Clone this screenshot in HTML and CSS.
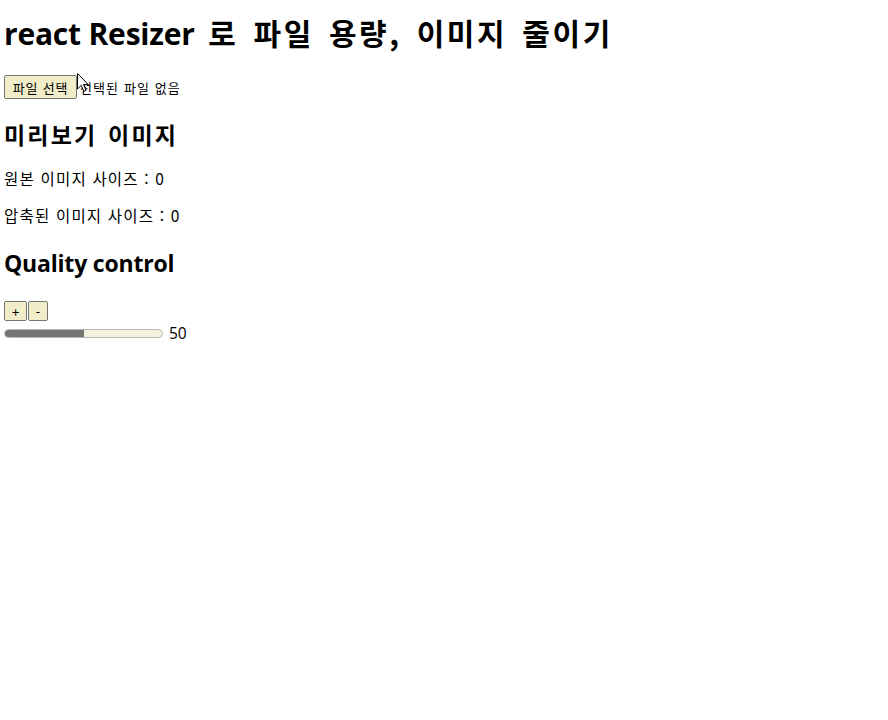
FILE: index.html
```html
<!DOCTYPE html>
<html lang="ko">
<head>
<meta charset="utf-8">
<title>react Resizer</title>
<link rel="stylesheet" href="styles.css">
</head>
<body>
<main class="app">
  <h1 class="title">react Resizer <span class="ko">로 파일 용량, 이미지 줄이기</span></h1>
  <div class="file-row">
    <span class="btn file-btn">파일 선택</span>
    <span class="file-label">선택된 파일 없음</span>
  </div>
  <h2 class="subtitle ko-sub">미리보기 이미지</h2>
  <p class="info">원본 이미지 사이즈 : 0</p>
  <p class="info">압축된 이미지 사이즈 : 0</p>
  <h2 class="subtitle quality">Quality control</h2>
  <div class="step-row">
    <span class="btn step">+</span>
    <span class="btn step">-</span>
  </div>
  <div class="range-row">
    <div class="range"><div class="range-fill" style="width:50%"></div></div>
    <span class="range-value">50</span>
  </div>
</main>
<svg class="cursor" width="12" height="19" viewBox="0 0 12 19" aria-hidden="true">
  <path d="M0.5 0.5 L0.5 16 L4.2 12.4 L6.8 18.3 L9 17.3 L6.5 11.6 L11.3 11.6 Z" fill="#fff" stroke="#000" stroke-width="1" stroke-linejoin="round"/>
</svg>
</body>
</html>
```
FILE: styles.css
```css
html, body {
  margin: 0;
  padding: 0;
}
body {
  position: relative;
  background-color: #ffffff;
  background-image:
    radial-gradient(circle at 1px 1px, #fff4a0 0.5px, transparent 0.7px),
    radial-gradient(circle at 3px 5px, #fff4a0 0.5px, transparent 0.7px);
  background-size: 4px 8px, 4px 8px;
  font-family: "Open Sans", "Noto Sans CJK KR", sans-serif;
  color: #000;
  min-height: 720px;
}
.app {
  padding: 0 4px;
}
.title {
  margin: 0;
  padding-top: 10px;
  font-size: 30px;
  line-height: 44px;
  font-weight: 700;
  letter-spacing: -0.2px;
}
.title .ko {
  font-family: "Noto Sans CJK KR", sans-serif;
  font-size: 30px;
  letter-spacing: 2.6px;
  word-spacing: 4px;
  margin-left: 6px;
}
.file-row {
  margin-top: 19px;
  display: flex;
  align-items: center;
  gap: 3px;
  height: 24px;
}
.btn {
  display: inline-flex;
  align-items: center;
  justify-content: center;
  background: #f1edc8;
  border: 1px solid #767676;
  border-radius: 2px;
  box-sizing: border-box;
  font-family: "Noto Sans CJK KR", sans-serif;
  font-size: 13px;
  color: #000;
}
.file-btn {
  width: 73px;
  height: 24px;
  font-size: 13px;
  letter-spacing: 0.8px;
}
.file-label {
  font-family: "Noto Sans CJK KR", sans-serif;
  font-size: 13px;
  letter-spacing: 1.1px;
}
.subtitle {
  margin: 20px 0 0;
  font-size: 23px;
  line-height: 34px;
  font-weight: 700;
}
.ko-sub {
  margin-top: 18px;
  margin-bottom: 2px;
  font-family: "Noto Sans CJK KR", sans-serif;
  font-size: 23px;
  letter-spacing: 2.2px;
  word-spacing: 2px;
}
.info {
  margin: 16px 0 0;
  font-family: "Noto Sans CJK KR", sans-serif;
  font-size: 15.5px;
  line-height: 22px;
  letter-spacing: 1.2px;
}
.info + .info {
  margin-top: 15px;
}
.quality {
  margin-top: 20px;
  letter-spacing: -0.2px;
}
.step-row {
  margin-top: 21px;
  display: flex;
  gap: 1px;
}
.step {
  width: 23px;
  height: 20px;
  font-size: 13px;
  line-height: 1;
}
.step + .step {
  width: 20px;
}
.range-row {
  display: flex;
  align-items: center;
  gap: 6px;
  margin-top: 2px;
  height: 20px;
}
.range {
  width: 159px;
  height: 9px;
  border: 1px solid #b8b8b8;
  border-radius: 5px;
  background: #f4f1dc;
  box-sizing: border-box;
  overflow: hidden;
}
.range-fill {
  height: 100%;
  background: #767676;
}
.range-value {
  font-size: 15.5px;
  font-family: "Open Sans", sans-serif;
}
.cursor {
  position: absolute;
  left: 77px;
  top: 73px;
}
```
